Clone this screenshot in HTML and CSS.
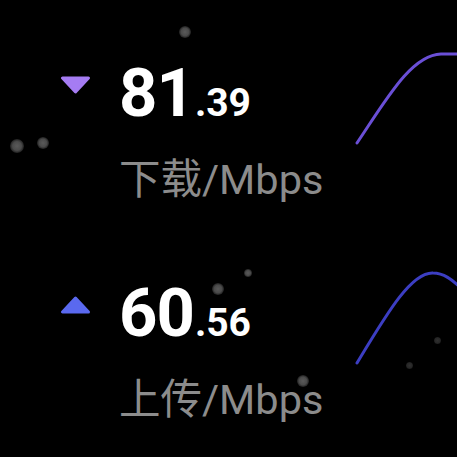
FILE: index.html
```html
<!DOCTYPE html>
<html lang="zh">
<head>
<meta charset="utf-8">
<link rel="stylesheet" href="styles.css">
</head>
<body>
<div class="screen">
  <div class="particles">
    <span class="dot" style="left:179px;top:26px;width:12px;height:12px"></span>
    <span class="dot" style="left:10px;top:139px;width:14px;height:14px"></span>
    <span class="dot" style="left:37px;top:137px;width:12px;height:12px"></span>
    <span class="dot" style="left:244px;top:269px;width:8px;height:8px"></span>
    <span class="dot" style="left:212px;top:283px;width:12px;height:12px"></span>
    <span class="dot" style="left:297px;top:375px;width:12px;height:12px"></span>
    <span class="dot dim" style="left:434px;top:337px;width:7px;height:7px"></span>
    <span class="dot dim" style="left:406px;top:362px;width:7px;height:7px"></span>
  </div>

  <div class="stat stat-down">
    <svg class="arrow" width="31" height="18" viewBox="0 0 31 18">
      <path d="M2.5 2 L28.5 2 L15.5 16 Z" fill="#a57cf3" stroke="#a57cf3" stroke-width="3" stroke-linejoin="round"/>
    </svg>
    <div class="text">
      <div class="value"><span class="int">81</span><span class="dec">.39</span></div>
      <div class="label">下载/Mbps</div>
    </div>
    <svg class="chart" width="101" height="110" viewBox="0 0 101 110">
      <path d="M1 103 C 30 60 55 15 85 14 L 104 14" fill="none" stroke="#6a4fd6" stroke-width="3" stroke-linecap="round"/>
    </svg>
  </div>

  <div class="stat stat-up">
    <svg class="arrow" width="31" height="18" viewBox="0 0 31 18">
      <path d="M2.5 16 L28.5 16 L15.5 2 Z" fill="#5a69ef" stroke="#5a69ef" stroke-width="3" stroke-linejoin="round"/>
    </svg>
    <div class="text">
      <div class="value"><span class="int">60</span><span class="dec">.56</span></div>
      <div class="label">上传/Mbps</div>
    </div>
    <svg class="chart" width="101" height="110" viewBox="0 0 101 110">
      <path d="M1 103 C 30 55 55 12 77 13 C 88 13 96 20 104 27" fill="none" stroke="#3c3ec2" stroke-width="3" stroke-linecap="round"/>
    </svg>
  </div>
</div>
</body>
</html>
```

FILE: styles.css
```css
html, body {
  margin: 0;
  padding: 0;
  background: #000;
}

.screen {
  position: relative;
  width: 457px;
  height: 457px;
  overflow: hidden;
  background: #000;
  padding-top: 60px;
  box-sizing: border-box;
  display: flex;
  flex-direction: column;
  gap: 80px;
}

.particles {
  position: absolute;
  inset: 0;
  pointer-events: none;
}

.dot {
  position: absolute;
  border-radius: 50%;
  background: radial-gradient(circle, #5a5a5a 0%, #4a4a4a 45%, rgba(60,60,60,0.4) 75%, rgba(40,40,40,0) 100%);
}

.dot.dim {
  background: radial-gradient(circle, #303030 0%, #262626 55%, rgba(30,30,30,0) 100%);
}

.stat {
  position: relative;
  display: flex;
  align-items: flex-start;
  padding-left: 60px;
}

.arrow {
  flex: none;
  margin-top: 16px;
  margin-right: 28px;
}

.text {
  flex: 1;
  display: flex;
  flex-direction: column;
  gap: 32px;
}

.value {
  font-family: Roboto, "Liberation Sans", sans-serif;
  font-weight: 700;
  color: #fff;
  line-height: 67px;
  height: 67px;
  white-space: nowrap;
}

.int {
  font-size: 67px;
  letter-spacing: -1px;
}

.dec {
  font-size: 39px;
  margin-left: 1px;
}

.label {
  font-family: Roboto, "Noto Sans CJK SC", sans-serif;
  font-size: 41.5px;
  line-height: 41px;
  height: 41px;
  color: #8c8c8c;
  white-space: nowrap;
}

.chart {
  flex: none;
  margin-top: -20px;
  overflow: visible;
}
```
